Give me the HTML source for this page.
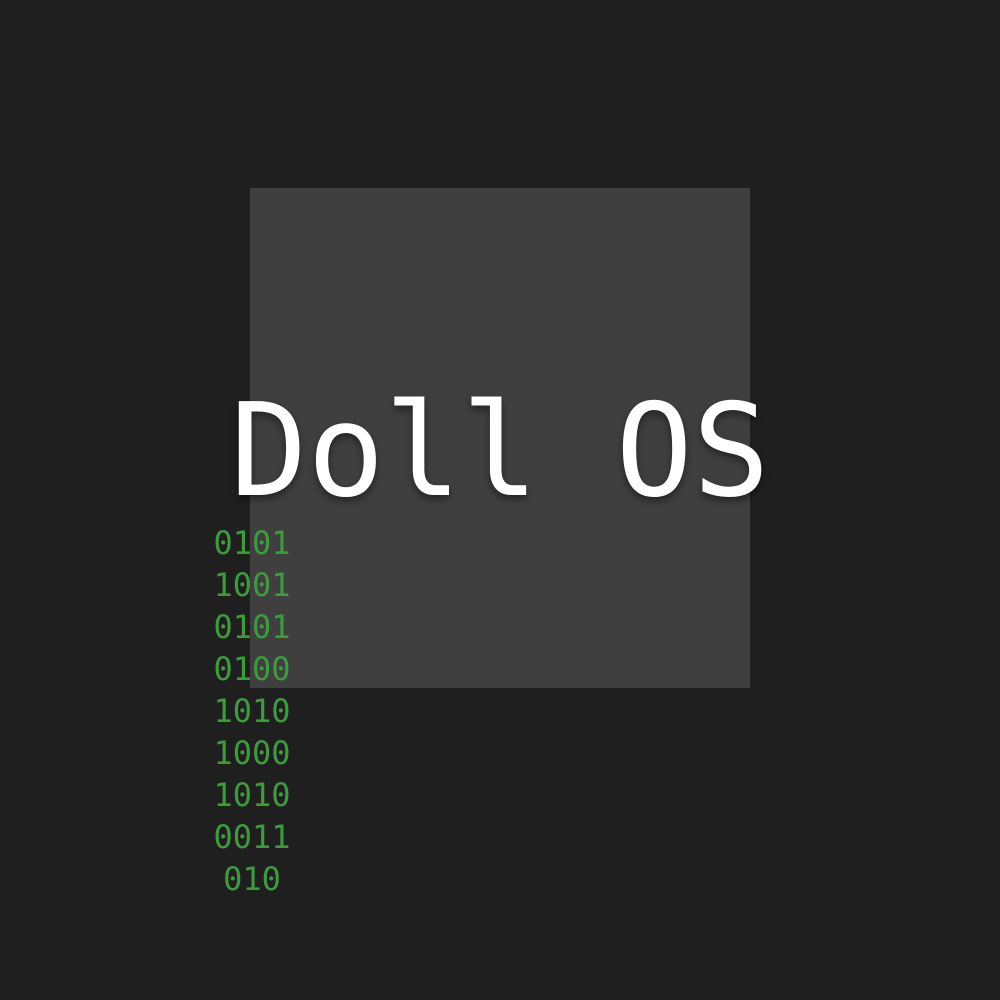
<!DOCTYPE html>
<html><head><meta charset="utf-8"><style>
html,body{margin:0;padding:0;width:1000px;height:1000px;background:#1f1f1f;overflow:hidden}
.sq{position:absolute;left:250px;top:188px;width:500px;height:500px;background:#3f3f3f}
.t{position:absolute;left:0;width:1000px;top:452px;text-align:center;font-family:"DejaVu Sans Mono",monospace;font-size:128px;color:#fff;line-height:0;text-shadow:0 4px 8px rgba(0,0,0,0.45);white-space:pre}
.b{position:absolute;left:152px;width:200px;text-align:center;font-family:"DejaVu Sans Mono",monospace;font-size:32px;color:#3f9a3f;line-height:0}
</style></head><body>
<div class="sq"></div>
<div class="t">Doll OS</div>
<div class="b" style="top:543px">0101</div>
<div class="b" style="top:585px">1001</div>
<div class="b" style="top:627px">0101</div>
<div class="b" style="top:669px">0100</div>
<div class="b" style="top:711px">1010</div>
<div class="b" style="top:753px">1000</div>
<div class="b" style="top:795px">1010</div>
<div class="b" style="top:837px">0011</div>
<div class="b" style="top:879px">010</div>
</body></html>
